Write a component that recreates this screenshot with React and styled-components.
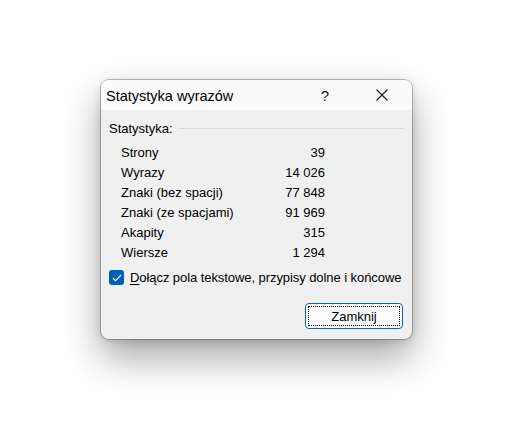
import React from 'react'
import styled, { createGlobalStyle } from 'styled-components'

const GlobalStyle = createGlobalStyle`
  body {
    margin: 0;
    background: #ffffff;
    font-family: 'Liberation Sans', Arial, sans-serif;
  }
`

const Page = styled.div`
  width: 526px;
  height: 424px;
  padding: 80px 0 0 101px;
  box-sizing: border-box;
`

const Dialog = styled.div`
  width: 311px;
  height: 259px;
  box-sizing: border-box;
  display: flex;
  flex-direction: column;
  background: #f0f0f0;
  border-radius: 8px;
  overflow: hidden;
  box-shadow: 0 0 0 1px rgba(0, 0, 0, 0.24), 0 2px 8px rgba(0, 0, 0, 0.14),
    0 18px 38px rgba(0, 0, 0, 0.36);
`

const TitleBar = styled.div`
  height: 30px;
  flex-shrink: 0;
  display: flex;
  align-items: center;
  background: #fafafa;
  padding-left: 5px;
`

const Title = styled.div`
  flex: 1;
  font-size: 14.5px;
  color: #000;
  padding-top: 2px;
`

const TitleButton = styled.div`
  width: ${p => p.$w}px;
  height: 30px;
  display: flex;
  align-items: center;
  justify-content: center;
  font-size: 15px;
  color: #1a1a1a;
`

const Body = styled.div`
  flex: 1;
  display: flex;
  flex-direction: column;
  padding: 11px 8px 10px 8px;
  font-size: 13px;
  color: #000;
`

const GroupHeader = styled.div`
  display: flex;
  align-items: center;
  gap: 6px;
  height: 16px;
  line-height: 16px;
`

const GroupRule = styled.div`
  flex: 1;
  height: 1px;
  background: #dadada;
  margin-top: -1px;
`

const StatsTable = styled.div`
  display: grid;
  grid-template-columns: 140px 64px;
  margin: 6px 0 0 12px;
`

const StatLabel = styled.div`
  line-height: 20px;
  height: 20px;
  white-space: nowrap;
`

const StatValue = styled.div`
  line-height: 20px;
  height: 20px;
  text-align: right;
  white-space: nowrap;
`

const CheckRow = styled.label`
  display: flex;
  align-items: center;
  gap: 6px;
  margin-top: 7px;
  white-space: nowrap;
  letter-spacing: -0.07px;
`

const CheckBox = styled.span`
  width: 15px;
  height: 15px;
  border-radius: 3px;
  background: #005fb8;
  display: flex;
  align-items: center;
  justify-content: center;
  flex-shrink: 0;
`

const Underlined = styled.span`
  text-decoration: underline;
  text-underline-offset: 2px;
`

const Footer = styled.div`
  margin-top: auto;
  display: flex;
  justify-content: flex-end;
  padding-right: 1px;
`

const Button = styled.button`
  width: 98px;
  height: 26px;
  padding: 2px;
  border: 1px solid #0067c0;
  border-radius: 4px;
  background: #fdfdfd;
  font-family: 'Liberation Sans', Arial, sans-serif;
  font-size: 13px;
  color: #000;
  box-sizing: border-box;
`

const FocusRing = styled.span`
  display: flex;
  align-items: center;
  justify-content: center;
  height: 100%;
  border: 1px dotted #000;
  box-sizing: border-box;
`

const stats = [
  ['Strony', '39'],
  ['Wyrazy', '14 026'],
  ['Znaki (bez spacji)', '77 848'],
  ['Znaki (ze spacjami)', '91 969'],
  ['Akapity', '315'],
  ['Wiersze', '1 294'],
]

export default function App() {
  return (
    <Page>
      <GlobalStyle />
      <Dialog>
        <TitleBar>
          <Title>Statystyka wyrazów</Title>
          <TitleButton $w={54}>?</TitleButton>
          <TitleButton $w={60}>
            <svg width="12" height="12" viewBox="0 0 12 12">
              <path d="M0.5 0.5 L11.5 11.5 M11.5 0.5 L0.5 11.5" stroke="#1a1a1a" strokeWidth="1.1" fill="none" />
            </svg>
          </TitleButton>
        </TitleBar>
        <Body>
          <GroupHeader>
            <span>Statystyka:</span>
            <GroupRule />
          </GroupHeader>
          <StatsTable>
            {stats.map(([label, value]) => (
              <React.Fragment key={label}>
                <StatLabel>{label}</StatLabel>
                <StatValue>{value}</StatValue>
              </React.Fragment>
            ))}
          </StatsTable>
          <CheckRow>
            <CheckBox>
              <svg width="10" height="8" viewBox="0 0 10 8">
                <path d="M1 4.2 L3.6 6.6 L9 1.2" stroke="#fff" strokeWidth="1.2" fill="none" />
              </svg>
            </CheckBox>
            <span><Underlined>D</Underlined>ołącz pola tekstowe, przypisy dolne i końcowe</span>
          </CheckRow>
          <Footer>
            <Button>
              <FocusRing>Zamknij</FocusRing>
            </Button>
          </Footer>
        </Body>
      </Dialog>
    </Page>
  )
}
